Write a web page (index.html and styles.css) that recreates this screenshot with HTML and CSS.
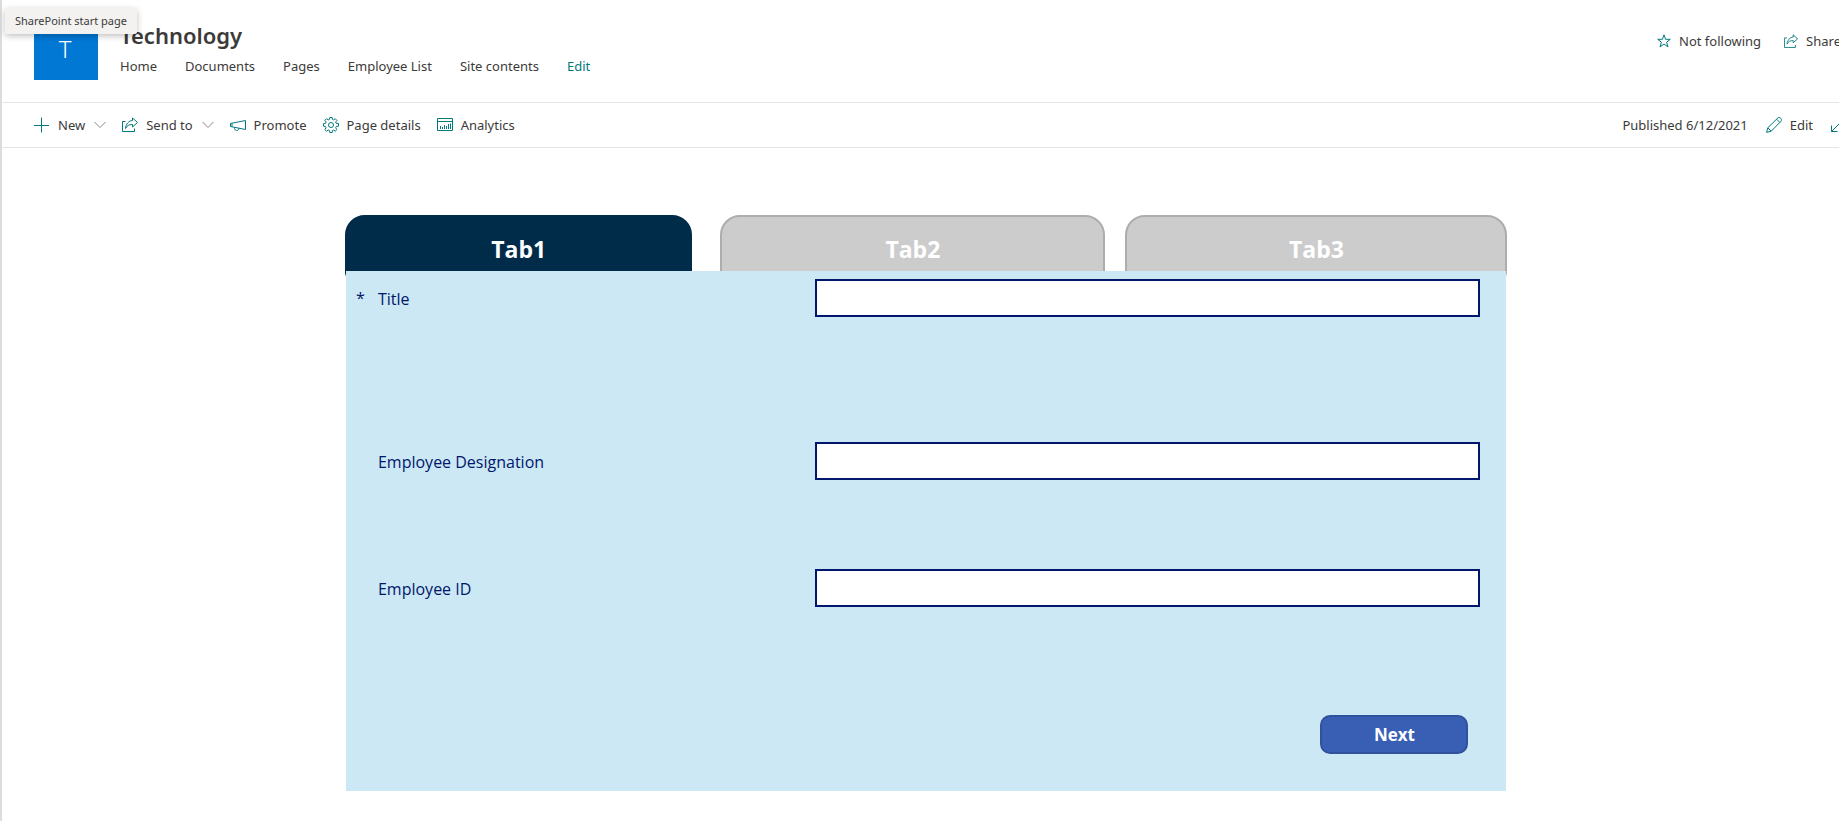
FILE: index.html
```html
<!DOCTYPE html>
<html lang="en">
<head>
    <meta charset="UTF-8">
    <meta name="viewport" content="width=device-width, initial-scale=1.0">
    <title>Technology</title>
    <link rel="stylesheet" href="styles.css">
</head>
<body>
    <div class="tooltip" role="tooltip">SharePoint start page</div>

    <header class="site-header">
        <a class="site-logo" href="#" aria-label="Technology home">T</a>
        <div class="site-info">
            <h1 class="site-title">Technology</h1>
            <nav class="site-nav">
                <a href="#">Home</a>
                <a href="#">Documents</a>
                <a href="#">Pages</a>
                <a href="#">Employee List</a>
                <a href="#">Site contents</a>
                <a href="#" class="nav-edit">Edit</a>
            </nav>
        </div>
        <div class="site-actions">
            <button type="button">
                <svg class="icon-small" viewBox="0 0 14 14"><path d="M7 .8l1.600 4.500h4.700l-3.700 2.900 1.400 4.700L7 10.100l-4 2.800 1.400-4.700L.7 5.300h4.700z"/></svg>
                Not following
            </button>
            <button type="button">
                <svg class="icon-small" viewBox="0 0 16 16"><path d="M3.500 4.500h-3v11h12.500v-3"/><path d="M10.500 1l5 4.500-5 4.500V7.500C7 7.500 5 8.500 3.500 11.500 4 7 6.500 3.800 10.500 3.500z"/></svg>
                Share
            </button>
        </div>
    </header>

    <div class="command-bar">
        <div class="commands">
            <button type="button">
                <svg class="icon" viewBox="0 0 16 16"><path d="M7.500 .5v15M0 8.500h15"/></svg>
                New
                <svg class="chevron" viewBox="0 0 12 8"><path d="M.5 1L6 6.500 11.500 1"/></svg>
            </button>
            <button type="button">
                <svg class="icon" viewBox="0 0 16 16"><path d="M3.500 4.500h-3v10h12v-3"/><path d="M10.500 1l5 4.500-5 4.500V7.500C7 7.500 5 8.500 3.500 11.500 4 7 6.500 3.800 10.500 3.500z"/></svg>
                Send to
                <svg class="chevron" viewBox="0 0 12 8"><path d="M.5 1L6 6.500 11.500 1"/></svg>
            </button>
            <button type="button">
                <svg class="icon" viewBox="0 0 16 16"><path d="M15.500 3.500v9L.5 9.500v-3z"/><path d="M4.500 10.300v1c0 2.600 4 3 4.300.5v-.7M2 6.300v3.400"/></svg>
                Promote
            </button>
            <button type="button">
                <svg class="icon" viewBox="0 0 16 16"><path d="M6.800.5h2.400l.3 1.900 1.100.5 1.600-1.200 1.700 1.700-1.200 1.600.5 1.300 2.300.3v2.600l-2.300.3-.5 1.300 1.200 1.700-1.700 1.700-1.600-1.200-1.100.5-.3 2H6.800l-.3-2-1.300-.5-1.600 1.200-1.700-1.700 1.200-1.700-.5-1.300-2.100-.3V6.600l2.100-.3.5-1.300-1.200-1.600 1.700-1.700 1.600 1.200 1.300-.5z"/><circle cx="8" cy="8" r="2.500"/></svg>
                Page details
            </button>
            <button type="button">
                <svg class="icon" viewBox="0 0 16 16"><path d="M.5 1.500h15v12H.5zM.5 4.500h15M3.500 12V9M5.500 12v-2M7.500 12V8M9.500 12V9M11.500 12V7M13.500 12V6.500"/></svg>
                Analytics
            </button>
        </div>
        <div class="page-status">
            <span>Published 6/12/2021</span>
            <button type="button">
                <svg class="icon" viewBox="0 0 16 16"><path d="M.6 15.400l1.200-4.600L11.900.9c1.700-1.500 4.600 1.300 3.200 3.200L5.200 14.200zM1.800 10.800l3.400 3.400M10.600 2.200l3.200 3.200"/></svg>
                Edit
            </button>
            <button type="button" aria-label="Expand content">
                <svg class="icon" viewBox="0 0 16 16"><path d="M.5 8.500v6h6M.5 14.500l14-14M8.500.5h6v6"/></svg>
            </button>
        </div>
    </div>

    <main class="content">
        <div class="tabs" role="tablist">
            <button type="button" class="tab tab-first active" role="tab" aria-selected="true">Tab1</button>
            <button type="button" class="tab tab-second" role="tab" aria-selected="false">Tab2</button>
            <button type="button" class="tab tab-third" role="tab" aria-selected="false">Tab3</button>
        </div>
        <form class="panel">
            <div class="field field-title">
                <span class="required">*</span>
                <label for="title">Title</label>
                <input type="text" id="title" required>
            </div>
            <div class="field field-designation">
                <span></span>
                <label for="designation">Employee Designation</label>
                <input type="text" id="designation">
            </div>
            <div class="field field-id">
                <span></span>
                <label for="employee-id">Employee ID</label>
                <input type="text" id="employee-id">
            </div>
            <div class="panel-footer">
                <button type="button" class="next">Next</button>
            </div>
        </form>
    </main>
</body>
</html>
```
FILE: styles.css
```css
:root{
    --teal: #03787c;
    --text: #3b3a39;
    --line: #e6e5e4;
    --navy: #00176b;
    --tab-active: #002b49;
    --panel: #cce8f5;
}

*{
    box-sizing: border-box;
}

body{
    margin: 0;
    min-height: 100vh;
    border-left: 2px solid #dddcdd;
    overflow-x: hidden;
    background-color: #fff;
    color: var(--text);
    font-family: "Noto Sans", "Open Sans", sans-serif;
    font-size: 13px;
    line-height: 20px;
}

button{
    display: flex;
    align-items: center;
    padding: 0;
    border: 0;
    background: none;
    color: inherit;
    font: inherit;
    white-space: nowrap;
}

svg{
    flex: none;
    fill: none;
    stroke: var(--teal);
}

.icon{
    width: 16px;
    height: 16px;
    margin-right: 8px;
}

.icon-small{
    width: 14px;
    height: 14px;
    margin-right: 8px;
}

.chevron{
    width: 12px;
    height: 8px;
    margin-left: 9px;
    stroke: #8a8886;
}

.tooltip{
    position: absolute;
    top: 8px;
    left: 5px;
    z-index: 1;
    padding: 4px 10px;
    border-radius: 2px;
    background-color: #f3f2f1;
    box-shadow: 0 2px 6px rgba(0, 0, 0, .25);
    font-size: 11px;
    line-height: 18px;
}

/* Site header */
.site-header{
    display: flex;
    height: 103px;
    padding: 16px 0 0 32px;
    border-bottom: 1px solid var(--line);
}

.site-logo{
    flex: none;
    width: 64px;
    height: 64px;
    padding-right: 2px;
    background-color: #0078d4;
    color: #fff;
    font-size: 24px;
    font-weight: 300;
    line-height: 66px;
    text-align: center;
    text-decoration: none;
}

.site-info{
    margin-left: 22px;
}

.site-title{
    margin: 4px 0 6px;
    font-size: 22px;
    font-weight: 600;
    line-height: 30px;
}

.site-nav{
    display: flex;
    gap: 28px;
}

.site-nav a{
    color: inherit;
    text-decoration: none;
    white-space: nowrap;
}

.site-nav .nav-edit{
    color: var(--teal);
}

.site-actions{
    display: flex;
    align-items: center;
    gap: 23px;
    height: 50px;
    margin-left: auto;
    margin-right: -2px;
}

/* Command bar */
.command-bar{
    display: flex;
    justify-content: space-between;
    height: 45px;
    padding-left: 32px;
    border-bottom: 1px solid var(--line);
}

.commands, .page-status{
    display: flex;
    align-items: center;
    gap: 16px;
}

.page-status{
    gap: 18px;
    margin-right: -16px;
}

/* Tabs and form */
.content{
    padding: 67px 18.05% 30px 18.67%;
    font-family: "Open Sans", "Noto Sans", sans-serif;
}

.tabs{
    display: flex;
}

.tab{
    justify-content: center;
    height: 64px;
    padding-top: 4px;
    border: 2px solid #adadad;
    border-radius: 20px 20px 6px 6px;
    background-color: #ccc;
    color: #fff;
    font-size: 23px;
    font-weight: 700;
}

.tab-first{
    flex: 347 0 0;
    margin-right: 28px;
}

.tab-second{
    flex: 385 0 0;
    margin-right: 20px;
}

.tab-third{
    flex: 382 0 0;
}

.tab.active{
    border-color: var(--tab-active);
    background-color: var(--tab-active);
}

.panel{
    position: relative;
    margin: -8px 1px 0;
    padding: 8px 26px 37px 10px;
    background-color: var(--panel);
    color: var(--navy);
    font-size: 16px;
}

.field{
    display: grid;
    grid-template-columns: 22px 437fr 665fr;
    align-items: center;
}

.field label{
    padding-top: 2px;
}

.field-title{
    margin-bottom: 125px;
}

.field-designation{
    margin-bottom: 89px;
}

.field-id{
    margin-bottom: 108px;
}

.field input{
    width: 100%;
    height: 38px;
    padding: 0 10px;
    border: 2px solid var(--navy);
    border-radius: 0;
    background-color: #fff;
    font: inherit;
}

.panel-footer{
    display: flex;
    justify-content: flex-end;
    padding-right: 12px;
}

.next{
    justify-content: center;
    width: 148px;
    height: 39px;
    border: 2px solid #30529b;
    border-radius: 10px;
    background-color: #385fb3;
    color: #fff;
    font-size: 17px;
    font-weight: 700;
}
```
